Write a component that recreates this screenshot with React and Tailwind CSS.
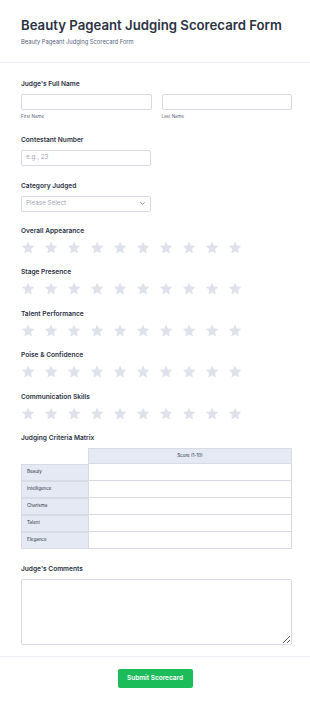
import { ChevronDown } from 'lucide-react'

// Scorecard form, scaled-down Jotform look.

const RATINGS = [
  'Overall Appearance',
  'Stage Presence',
  'Talent Performance',
  'Poise & Confidence',
  'Communication Skills'
]

const CRITERIA = ['Beauty', 'Intelligence', 'Charisma', 'Talent', 'Elegance']

function Star() {
  return (
    <svg width="12.5" height="12.5" viewBox="0 0 24 24" className="shrink-0">
      <path
        d="M12 1.8l3.1 6.6 7.1.9c.6.1.8.8.4 1.2l-5.2 5 1.3 7.1c.1.6-.5 1-1 .7L12 19.9l-6.3 3.4c-.5.3-1.1-.1-1-.7l1.3-7.1-5.2-5c-.4-.4-.2-1.1.4-1.2l7.1-.9L11.2 1.8c.3-.5 1.1-.5 1.3 0z"
        fill="#dfe2eb"
      />
    </svg>
  )
}

function Label({ children }) {
  return <div className="text-[6.6px] leading-[10px] font-semibold text-[#2c3345]">{children}</div>
}

export default function App() {
  return (
    <div className="w-[310px] min-h-[704px] bg-white font-['Inter',sans-serif] text-[#2c3345]">
      <div className="px-[21px] pt-[16px] pb-[16px] border-b border-[#eceef3]">
        <h1 className="text-[13.2px] leading-[18px] font-semibold whitespace-nowrap">
          Beauty Pageant Judging Scorecard Form
        </h1>
        <p className="mt-[3px] text-[5.8px] leading-[9px] text-[#57647e]">
          Beauty Pageant Judging Scorecard Form
        </p>
      </div>

      <div className="px-[21px] pt-[16px] pb-[11px] border-b border-[#eceef3] flex flex-col">
        <Label>Judge's Full Name</Label>
        <div className="mt-[5px] grid grid-cols-2 gap-[10px] w-[271px]">
          <div>
            <div className="h-[16px] border border-[#d8dbe4] rounded-[2px]" />
            <div className="mt-[3px] text-[4.5px] leading-[8px] text-[#57647e]">First Name</div>
          </div>
          <div>
            <div className="h-[16px] border border-[#d8dbe4] rounded-[2px]" />
            <div className="mt-[3px] text-[4.5px] leading-[8px] text-[#57647e]">Last Name</div>
          </div>
        </div>

        <div className="mt-[14px]">
          <Label>Contestant Number</Label>
          <div className="mt-[5px] h-[16px] w-[130px] border border-[#d8dbe4] rounded-[2px] flex items-center px-[4px] text-[6.3px] text-[#a0a6b6]">
            e.g., 23
          </div>
        </div>

        <div className="mt-[14.5px]">
          <Label>Category Judged</Label>
          <div className="mt-[5px] h-[16px] w-[130px] border border-[#d8dbe4] rounded-[2px] flex items-center justify-between px-[4px] text-[6.3px] text-[#a0a6b6]">
            <span>Please Select</span>
            <ChevronDown size={7} strokeWidth={2.5} className="text-[#57647e]" />
          </div>
        </div>

        {RATINGS.map((r) => (
          <div key={r} className="mt-[14px] h-[27.5px]">
            <Label>{r}</Label>
            <div className="mt-[5px] flex gap-[10.6px] pl-[0.5px]">
              {Array.from({ length: 10 }).map((_, i) => (
                <Star key={i} />
              ))}
            </div>
          </div>
        ))}

        <div className="mt-[14px]">
          <Label>Judging Criteria Matrix</Label>
          <div className="mt-[5px] w-[271px] text-[4.5px] text-[#2c3345]">
            <div className="flex h-[16px]">
              <div className="w-[67px]" />
              <div className="flex-1 bg-[#e5e9f4] border border-[#d8dbe4] flex items-center justify-center">
                Score (1-10)
              </div>
            </div>
            {CRITERIA.map((c) => (
              <div key={c} className="flex h-[17px]">
                <div className="w-[67px] bg-[#e5e9f4] border-l border-b border-[#d8dbe4] flex items-center pl-[5px] first:border-t">
                  {c}
                </div>
                <div className="flex-1 border-l border-r border-b border-[#d8dbe4]" />
              </div>
            ))}
          </div>
        </div>

        <div className="mt-[15px]">
          <Label>Judge's Comments</Label>
          <textarea className="mt-[5px] block h-[66px] w-[271px] border border-[#d8dbe4] rounded-[2px] resize-y outline-none" />
        </div>
      </div>

      <div className="flex justify-center pt-[12px]">
        <button className="h-[19px] w-[75px] rounded-[2px] bg-[#1cbc5b] text-white text-[6.5px] font-semibold">
          Submit Scorecard
        </button>
      </div>
    </div>
  )
}
